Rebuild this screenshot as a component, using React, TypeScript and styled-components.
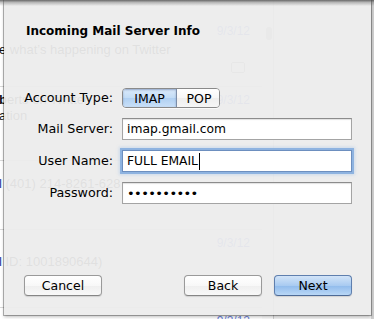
import React from 'react';
import styled, { createGlobalStyle } from 'styled-components';

const GlobalStyle = createGlobalStyle`
  html, body {
    margin: 0;
    padding: 0;
    width: 374px;
    height: 319px;
    overflow: hidden;
    background: #ffffff;
  }
`;

const feed = [
  { date: '9/3/12', lead: 'e', text: ' what\u2019s happening on Twitter', sub: '', icon: true, height: 87 },
  { date: '9/3/12', lead: 'b', text: 'erts on Twitter', sub: 'ation', bold: true, height: 74 },
  { date: '', lead: 'l', text: ' (401) 214-8261-628 -', sub: '', link: true, height: 69 },
  { date: '9/3/12', lead: 'l', text: ' ID: 1001890644)', sub: '', link: true, height: 78 },
  { date: '9/3/12', lead: 'a...', text: '', sub: '', height: 40 },
];

export default function App() {
  return (
    <Window>
      <GlobalStyle />
      <Backdrop>
        <FeedList>
          {feed.map((row, i) => (
            <FeedRow key={i} $height={row.height} $last={i === feed.length - 1}>
              <FeedLine>
                <Lead $bold={row.bold} $link={row.link}>
                  {row.lead}
                </Lead>
                {row.text}
              </FeedLine>
              {row.sub && <FeedLine>{row.sub}</FeedLine>}
              {row.date && <FeedDate $first={i === 0}>{row.date}</FeedDate>}
              {row.icon && <FeedIcon />}
            </FeedRow>
          ))}
        </FeedList>
        <ScrollTrack>
          <ScrollKnob />
        </ScrollTrack>
        <SidePane />
        <WindowEdge />
      </Backdrop>

      <TitleShadow />

      <Sheet>
        <Title>Incoming Mail Server Info</Title>
        <Form>
          <Label>Account Type:</Label>
          <Segmented>
            <Segment $selected>IMAP</Segment>
            <Segment>POP</Segment>
          </Segmented>

          <Label>Mail Server:</Label>
          <Field>imap.gmail.com</Field>

          <Label>User Name:</Label>
          <Field $focused>
            FULL EMAIL
            <Caret />
          </Field>

          <Label>Password:</Label>
          <Field $secret>{'\u2022'.repeat(10)}</Field>
        </Form>

        <ButtonBar>
          <Button>Cancel</Button>
          <Spacer />
          <Button>Back</Button>
          <Button $primary>Next</Button>
        </ButtonBar>
      </Sheet>
    </Window>
  );
}

const Window = styled.div`
  position: relative;
  width: 374px;
  height: 319px;
  overflow: hidden;
  background: #ffffff;
  font-family: 'DejaVu Sans', 'Liberation Sans', sans-serif;
`;

const Backdrop = styled.div`
  display: flex;
  height: 100%;
  font-family: 'Liberation Sans', Arial, sans-serif;
  font-size: 13px;
  color: #111;
`;

const FeedList = styled.div`
  width: 262px;
  display: flex;
  flex-direction: column;
  background: #fff;
`;

const FeedRow = styled.div<{ $height: number; $last?: boolean }>`
  position: relative;
  height: ${p => p.$height}px;
  flex: none;
  box-sizing: border-box;
  border-bottom: ${p => (p.$last ? 'none' : '1px solid #d8d8d8')};
  padding: 42px 0 0 0;
  margin-left: -1px;

  &:nth-child(2) {
    padding-top: 5px;
  }
  &:nth-child(3) {
    padding-top: 15px;
  }
  &:nth-child(4) {
    padding-top: 24px;
  }
  &:nth-child(5) {
    padding-top: 76px;
  }
`;

const FeedLine = styled.div`
  line-height: 16px;
  white-space: nowrap;
  color: #222;
`;

const Lead = styled.span<{ $bold?: boolean; $link?: boolean }>`
  font-weight: ${p => (p.$bold ? 700 : 400)};
  color: ${p => (p.$link ? '#1a3a9a' : '#111')};
`;

const FeedDate = styled.span<{ $first?: boolean }>`
  position: absolute;
  right: 12px;
  top: ${p => (p.$first ? 24 : 6)}px;
  color: #6a7fd8;
  font-size: 12px;
`;

const FeedIcon = styled.span`
  position: absolute;
  right: 17px;
  top: 62px;
  width: 12px;
  height: 9px;
  border: 1px solid #999;
  border-radius: 2px;
`;

const ScrollTrack = styled.div`
  width: 12px;
  padding: 27px 0 0 4px;
  box-sizing: border-box;
  border-right: 1px solid #cfcfcf;
  background: #fafafa;
`;

const ScrollKnob = styled.div`
  width: 6px;
  height: 13px;
  border-radius: 3px;
  background: #b0b0b0;
`;

const SidePane = styled.div`
  flex: 1;
  background: #f3f3f3;
`;

const WindowEdge = styled.div`
  width: 3px;
  background: #cfcfcf;
`;

const TitleShadow = styled.div`
  position: absolute;
  left: 0;
  top: 0;
  right: 0;
  height: 6px;
  background: linear-gradient(
    rgba(60, 60, 60, 0.75),
    rgba(80, 80, 80, 0.35) 40%,
    rgba(120, 120, 120, 0)
  );
  z-index: 3;
`;

const Sheet = styled.div`
  position: absolute;
  left: 4px;
  top: 0;
  width: 367px;
  height: 315px;
  box-sizing: border-box;
  padding: 23px 19px 19px 20px;
  display: flex;
  flex-direction: column;
  background: rgba(236, 236, 236, 0.94);
  box-shadow: 0 0 0 1px rgba(0, 0, 0, 0.28), 0 2px 3px rgba(0, 0, 0, 0.25);
  z-index: 2;
  color: #000;
`;

const Title = styled.div`
  padding-left: 2px;
  font-size: 12px;
  font-weight: 700;
  line-height: 16px;
`;

const Form = styled.div`
  margin-top: 49px;
  display: grid;
  grid-template-columns: 89px 1fr;
  column-gap: 9px;
  row-gap: 10px;
  align-items: center;
`;

const Label = styled.div`
  text-align: right;
  font-size: 12.7px;
  line-height: 16px;
  white-space: nowrap;
`;

const Segmented = styled.div`
  display: flex;
  width: 98px;
  height: 20px;
  box-sizing: border-box;
  border: 1px solid #8a8a8a;
  border-radius: 4px;
  overflow: hidden;
  box-shadow: 0 1px 0 rgba(255, 255, 255, 0.7);
`;

const Segment = styled.div<{ $selected?: boolean }>`
  flex: none;
  width: ${p => (p.$selected ? 53 : 44)}px;
  display: flex;
  align-items: center;
  justify-content: center;
  font-size: 12.5px;
  color: #000;
  background: ${p =>
    p.$selected
      ? 'linear-gradient(#dbeafa, #c2dcf6 50%, #b0d0f2 51%, #c9e0f8)'
      : 'linear-gradient(#ffffff, #f7f7f7 50%, #eeeeee 51%, #f6f6f6)'};
  box-shadow: ${p => (p.$selected ? 'inset 0 1px 2px rgba(40, 70, 130, 0.4)' : 'none')};
  border-right: ${p => (p.$selected ? '1px solid #7d8ea8' : 'none')};
`;

const Field = styled.div<{ $focused?: boolean; $secret?: boolean }>`
  position: relative;
  height: 22px;
  box-sizing: border-box;
  display: flex;
  align-items: center;
  padding-left: 4px;
  font-size: ${p => (p.$secret ? 13 : 12.3)}px;
  letter-spacing: ${p => (p.$secret ? '-0.6px' : '0')};
  background: #fff;
  border: 1px solid ${p => (p.$focused ? '#6d8fbf' : '#a4a4a4')};
  border-top-color: ${p => (p.$focused ? '#6d8fbf' : '#8c8c8c')};
  box-shadow: ${p =>
    p.$focused
      ? '0 0 0 2px rgba(120, 165, 220, 0.75), 0 0 3px 3px rgba(140, 180, 230, 0.35)'
      : 'inset 0 1px 1px rgba(0, 0, 0, 0.12)'};
  white-space: nowrap;
`;

const Caret = styled.span`
  display: inline-block;
  width: 1px;
  height: 17px;
  margin-left: 1px;
  background: #000;
`;

const ButtonBar = styled.div`
  margin-top: auto;
  display: flex;
  align-items: center;
  gap: 12px;
`;

const Spacer = styled.div`
  flex: 1;
`;

const Button = styled.div<{ $primary?: boolean }>`
  width: 78px;
  height: 21px;
  box-sizing: border-box;
  display: flex;
  align-items: center;
  justify-content: center;
  font-size: 12.5px;
  color: #000;
  border-radius: 4px;
  border: 1px solid ${p => (p.$primary ? '#5f7fae' : '#9a9a9a')};
  border-bottom-color: ${p => (p.$primary ? '#4d6a96' : '#858585')};
  background: ${p =>
    p.$primary
      ? 'linear-gradient(#d2e4f8, #a9cbf1 50%, #90bbec 51%, #b9d7f6)'
      : 'linear-gradient(#ffffff, #f8f8f8 50%, #efefef 51%, #f8f8f8)'};
  box-shadow: 0 1px 1px rgba(0, 0, 0, 0.12);
`;
